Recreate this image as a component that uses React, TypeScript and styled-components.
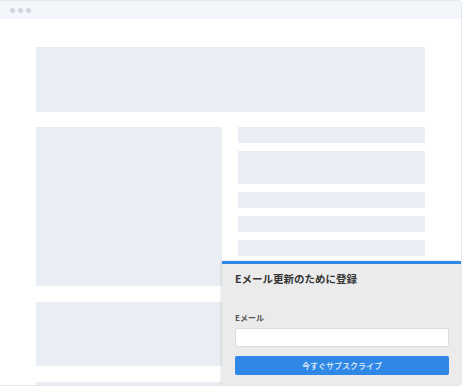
import styled, { createGlobalStyle } from 'styled-components';

const GlobalStyle = createGlobalStyle`
  html, body {
    margin: 0;
    padding: 0;
    background: #ffffff;
  }
  body {
    font-family: "Noto Sans CJK JP", "Noto Sans", sans-serif;
  }
`;

const rightRows = [16, 33, 16, 16, 16];

export default function App() {
  return (
    <>
      <GlobalStyle />
      <BrowserWindow>
        <TopBar>
          <Dot />
          <Dot />
          <Dot />
        </TopBar>
        <Content>
          <Placeholder height={65} />
          <Columns>
            <LeftColumn>
              <Placeholder height={159} />
              <Placeholder height={64} />
              <Placeholder height={40} />
            </LeftColumn>
            <RightColumn>
              {rightRows.map((h, idx) => (
                <Placeholder key={idx} height={h} />
              ))}
            </RightColumn>
          </Columns>
        </Content>
        <SubscribePopup>
          <PopupTitle>Eメール更新のために登録</PopupTitle>
          <FieldLabel>Eメール</FieldLabel>
          <EmailInput type="email" />
          <SubscribeButton>今すぐサブスクライブ</SubscribeButton>
        </SubscribePopup>
      </BrowserWindow>
    </>
  );
}

const BrowserWindow = styled.div`
  position: relative;
  width: 461px;
  height: 384px;
  border: 1px solid #e3e8ee;
  border-left: none;
  border-radius: 0 4px 4px 0;
  overflow: hidden;
  background: #ffffff;
`;

const TopBar = styled.div`
  height: 18px;
  background: #f3f6fa;
  display: flex;
  align-items: center;
  gap: 3px;
  padding-left: 10px;
`;

const Dot = styled.span`
  width: 5px;
  height: 5px;
  border-radius: 50%;
  background: #cdd6e1;
`;

const Content = styled.div`
  display: flex;
  flex-direction: column;
  gap: 15px;
  padding: 28px 36px 0;
`;

const Placeholder = styled.div<{ height: number }>`
  height: ${({ height }) => height}px;
  background: #e9eef5;
`;

const Columns = styled.div`
  display: grid;
  grid-template-columns: 186px 187px;
  gap: 16px;
`;

const LeftColumn = styled.div`
  display: flex;
  flex-direction: column;
  gap: 16px;
`;

const RightColumn = styled.div`
  display: flex;
  flex-direction: column;
  gap: 8px;
`;

const SubscribePopup = styled.div`
  position: absolute;
  left: 222px;
  top: 260px;
  right: 0;
  bottom: 0;
  background: #ebebeb;
  border-top: 3px solid #2f87e6;
  box-shadow: -1px 0 2px rgba(0, 0, 0, 0.12);
  padding: 8px 12px 0 13px;
  display: flex;
  flex-direction: column;
`;

const PopupTitle = styled.div`
  font-size: 10.5px;
  font-weight: 700;
  color: #333333;
  line-height: 14px;
`;

const FieldLabel = styled.div`
  margin-top: 27px;
  font-size: 8px;
  font-weight: 700;
  color: #555555;
  line-height: 10px;
`;

const EmailInput = styled.input`
  margin-top: 5px;
  height: 19px;
  box-sizing: border-box;
  border: 1px solid #dddddd;
  border-radius: 2px;
  background: #ffffff;
  outline: none;
`;

const SubscribeButton = styled.button`
  margin-top: 9px;
  height: 19px;
  border: none;
  border-radius: 2px;
  background: #2f87e6;
  color: #eaf3fd;
  font-family: "Noto Sans CJK JP", "Noto Sans", sans-serif;
  font-size: 8px;
  font-weight: 500;
  padding: 0;
  cursor: pointer;
`;
